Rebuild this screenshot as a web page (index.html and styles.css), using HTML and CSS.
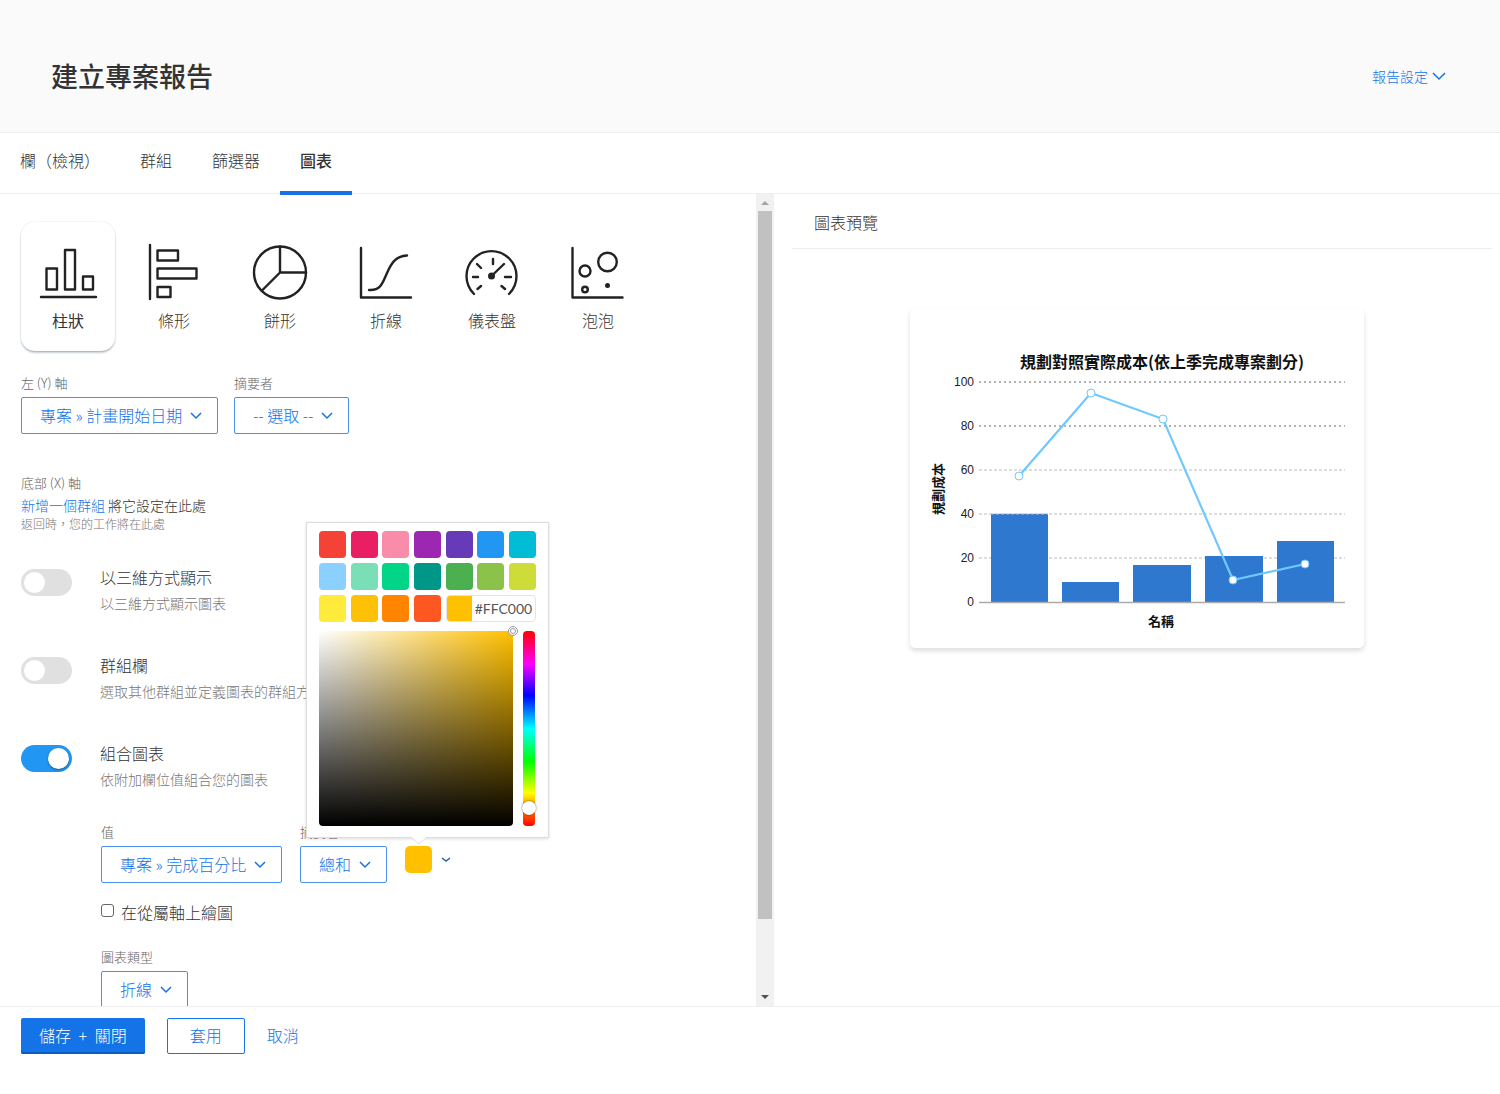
FILE: index.html
```html
<!DOCTYPE html>
<html lang="zh-Hant">
<head>
<meta charset="utf-8">
<meta name="viewport" content="width=device-width, initial-scale=1">
<title>建立專案報告</title>
<link rel="stylesheet" href="styles.css">
</head>
<body>
<header class="page-header">
  <h1 class="page-title">建立專案報告</h1>
  <button type="button" class="settings-button">報告設定
    <svg width="14" height="9" viewBox="0 0 14 9" aria-hidden="true"><path class="chevron" d="M1 1l6 6 6-6"/></svg>
  </button>
</header>

<nav class="tabs">
  <a class="tab" href="#columns">欄（檢視）</a>
  <a class="tab" href="#groups">群組</a>
  <a class="tab" href="#filters">篩選器</a>
  <a class="tab tab-active" href="#chart" aria-current="page">圖表</a>
</nav>

<main class="workspace">
  <section class="options" id="chart">
    <div class="chart-types">
      <button type="button" class="chart-type chart-type-active" aria-pressed="true">
        <svg class="type-icon" viewBox="0 0 60 60" aria-hidden="true"><path d="M3 55H58M8.500 26.500h10.500v21H8.500zM27 8h10v39.500H27zM45 34.500h10v13H45z"/></svg>
        柱狀
      </button>
      <button type="button" class="chart-type">
        <svg class="type-icon" viewBox="0 0 60 60" aria-hidden="true"><path d="M6 3V57M13.500 8.500H34v10H13.500zM13.500 26.500h39v10h-39zM13.500 45h13v10h-13z"/></svg>
        條形
      </button>
      <button type="button" class="chart-type">
        <svg class="type-icon" viewBox="0 0 60 60" aria-hidden="true"><circle cx="30" cy="30.500" r="26"/><path d="M30 4.500v26h26M30 30.500L12 48.500"/></svg>
        餅形
      </button>
      <button type="button" class="chart-type">
        <svg class="type-icon" viewBox="0 0 60 60" aria-hidden="true"><path d="M5 6v49.500h50M13 48C25 49 27 40 31 31S39 14 51 13.500"/></svg>
        折線
      </button>
      <button type="button" class="chart-type">
        <svg class="type-icon" viewBox="0 0 60 60" aria-hidden="true"><path d="M12 52A25 25 0 1 1 47 52M29.500 34L42 22M31 17v5M15 22l4 4M11 35h5M43 35h6M15.500 47l3.500-3M39.500 44l3.500 3"/><circle class="solid" cx="29.500" cy="34" r="3.500"/></svg>
        儀表盤
      </button>
      <button type="button" class="chart-type">
        <svg class="type-icon" viewBox="0 0 60 60" aria-hidden="true"><path d="M4.500 6v49.500h50"/><circle cx="17" cy="29" r="5.500"/><circle cx="39.500" cy="20" r="9.300"/><circle cx="17" cy="47.500" r="2.800"/><circle class="solid" cx="39.500" cy="43.500" r="2.500"/></svg>
        泡泡
      </button>
    </div>

    <div class="field-row">
      <div class="field">
        <label class="field-label" for="y-axis">左 (Y) 軸</label>
        <span class="dropdown">
          <select id="y-axis"><option>專案 » 計畫開始日期</option></select>
          <svg width="12" height="8" viewBox="0 0 12 8" aria-hidden="true"><path class="chevron" d="M1 1l5 5 5-5"/></svg>
        </span>
      </div>
      <div class="field">
        <label class="field-label" for="y-summary">摘要者</label>
        <span class="dropdown">
          <select id="y-summary"><option>-- 選取 --</option></select>
          <svg width="12" height="8" viewBox="0 0 12 8" aria-hidden="true"><path class="chevron" d="M1 1l5 5 5-5"/></svg>
        </span>
      </div>
    </div>

    <div class="x-axis">
      <div class="field-label">底部 (X) 軸</div>
      <p class="x-axis-text"><a href="#groups">新增一個群組</a> 將它設定在此處</p>
      <p class="x-axis-note">返回時，您的工作將在此處</p>
    </div>

    <div class="toggle-row">
      <input class="switch" type="checkbox" role="switch" id="three-d">
      <div>
        <label class="toggle-title" for="three-d">以三維方式顯示</label>
        <p class="toggle-note">以三維方式顯示圖表</p>
      </div>
    </div>
    <div class="toggle-row">
      <input class="switch" type="checkbox" role="switch" id="group-column">
      <div>
        <label class="toggle-title" for="group-column">群組欄</label>
        <p class="toggle-note">選取其他群組並定義圖表的群組方式</p>
      </div>
    </div>
    <div class="toggle-row">
      <input class="switch" type="checkbox" role="switch" id="combo" checked>
      <div>
        <label class="toggle-title" for="combo">組合圖表</label>
        <p class="toggle-note">依附加欄位值組合您的圖表</p>
      </div>
    </div>

    <div class="combo-options">
      <div class="combo-fields">
        <div class="field">
          <label class="field-label" for="combo-value">值</label>
          <span class="dropdown">
            <select id="combo-value"><option>專案 » 完成百分比</option></select>
            <svg width="12" height="8" viewBox="0 0 12 8" aria-hidden="true"><path class="chevron" d="M1 1l5 5 5-5"/></svg>
          </span>
        </div>
        <div class="field">
          <label class="field-label" for="combo-summary">摘要者</label>
          <span class="dropdown">
            <select id="combo-summary"><option>總和</option></select>
            <svg width="12" height="8" viewBox="0 0 12 8" aria-hidden="true"><path class="chevron" d="M1 1l5 5 5-5"/></svg>
          </span>
        </div>
        <div class="color-field">
          <button type="button" class="color-button" aria-label="色彩">
            <span class="color-current"></span>
            <svg width="10" height="6" viewBox="0 0 10 6" aria-hidden="true"><path class="chevron chevron-dark" d="M1 1l4 3 4-3"/></svg>
          </button>
          <div class="picker">
            <div class="palette">
              <button type="button" class="swatch c-red" aria-label="#F44336"></button>
              <button type="button" class="swatch c-pink" aria-label="#E91E63"></button>
              <button type="button" class="swatch c-rose" aria-label="#F98DA9"></button>
              <button type="button" class="swatch c-purple" aria-label="#9C27B0"></button>
              <button type="button" class="swatch c-violet" aria-label="#673AB7"></button>
              <button type="button" class="swatch c-blue" aria-label="#2196F3"></button>
              <button type="button" class="swatch c-cyan" aria-label="#00BCD4"></button>
              <button type="button" class="swatch c-sky" aria-label="#8CD0FF"></button>
              <button type="button" class="swatch c-mint" aria-label="#7ADEB6"></button>
              <button type="button" class="swatch c-emerald" aria-label="#03D588"></button>
              <button type="button" class="swatch c-teal" aria-label="#009688"></button>
              <button type="button" class="swatch c-green" aria-label="#4CAF50"></button>
              <button type="button" class="swatch c-leaf" aria-label="#8BC34A"></button>
              <button type="button" class="swatch c-lime" aria-label="#CDDC39"></button>
              <button type="button" class="swatch c-yellow" aria-label="#FFEB3B"></button>
              <button type="button" class="swatch c-amber" aria-label="#FFC107"></button>
              <button type="button" class="swatch c-orange" aria-label="#FF8400"></button>
              <button type="button" class="swatch c-flame" aria-label="#FF5722"></button>
              <div class="hex">
                <span class="hex-sample"></span>
                <input class="hex-input" type="text" value="#FFC000" aria-label="色碼">
              </div>
            </div>
            <div class="picker-body">
              <div class="shade"><span class="shade-handle"></span></div>
              <input class="hue" type="range" min="0" max="100" value="94" aria-label="色相">
            </div>
            <svg class="picker-arrow" width="18" height="9" viewBox="0 0 18 9" aria-hidden="true"><path d="M1 0l8 7 8-7"/></svg>
          </div>
        </div>
      </div>

      <div class="check-row">
        <input type="checkbox" class="check" id="secondary-axis">
        <label for="secondary-axis">在從屬軸上繪圖</label>
      </div>

      <div class="field">
        <label class="field-label" for="combo-type">圖表類型</label>
        <span class="dropdown">
          <select id="combo-type"><option>折線</option></select>
          <svg width="12" height="8" viewBox="0 0 12 8" aria-hidden="true"><path class="chevron" d="M1 1l5 5 5-5"/></svg>
        </span>
      </div>
    </div>
  </section>

  <div class="scrollbar" aria-hidden="true">
    <svg width="18" height="17" viewBox="0 0 18 17"><path fill="#a3a3a3" d="M5 11l4-4 4 4z"/></svg>
    <div class="scroll-track"><div class="scroll-thumb"></div></div>
    <svg width="18" height="17" viewBox="0 0 18 17"><path fill="#505050" d="M5 6l4 4 4-4z"/></svg>
  </div>

  <section class="preview">
    <h2 class="preview-title">圖表預覽</h2>
    <div class="chart-card">
      <svg class="chart" viewBox="0 0 454 339" role="img" aria-label="規劃對照實際成本">
        <text class="chart-title" x="252" y="59">規劃對照實際成本(依上季完成專案劃分)</text>
        <g class="grid-line">
          <path class="grid-dark" d="M69 73H435M69 117H435"/>
          <path d="M69 161H435M69 205H435M69 249H435"/>
        </g>
        <g class="tick">
          <text x="64" y="77">100</text>
          <text x="64" y="121">80</text>
          <text x="64" y="165">60</text>
          <text x="64" y="209">40</text>
          <text x="64" y="253">20</text>
          <text x="64" y="297">0</text>
        </g>
        <path class="bars" d="M81 205h57v88h-57zM152 273h57v20h-57zM223 256h58v37h-58zM295 247h58v46h-58zM367 232h57v61h-57z"/>
        <path class="base-line" d="M69 293.500H435"/>
        <path class="grid-line" d="M81 205H138"/>
        <path class="trend" d="M109 167L181 84L253 110L323 271L395 255"/>
        <g class="points">
          <circle cx="109" cy="167" r="4"/>
          <circle cx="181" cy="84" r="4"/>
          <circle cx="253" cy="110" r="4"/>
          <circle cx="323" cy="271" r="4"/>
          <circle cx="395" cy="255" r="4"/>
        </g>
        <text class="axis-title" x="251" y="317">名稱</text>
        <text class="axis-title" transform="translate(33 180) rotate(-90)">規劃成本</text>
      </svg>
    </div>
  </section>
</main>

<footer class="actions">
  <button type="button" class="button button-primary">儲存 <span class="plus">+</span> 關閉</button>
  <button type="button" class="button button-outline">套用</button>
  <button type="button" class="button button-link">取消</button>
</footer>
</body>
</html>
```

FILE: styles.css
```css
* {
  box-sizing: border-box;
}

body {
  margin: 0;
  height: 100vh;
  display: flex;
  flex-direction: column;
  overflow: hidden;
  background: #fff;
  color: #333;
  font-family: "Noto Sans CJK TC", sans-serif;
  font-size: 16px;
  font-weight: 300;
  line-height: 24px;
}

button,
input,
select {
  margin: 0;
  padding: 0;
  border: 0;
  background: none;
  color: inherit;
  font: inherit;
}

h1,
h2,
p {
  margin: 0;
}

a {
  color: #1473e6;
  text-decoration: none;
}

.chevron {
  fill: none;
  stroke: currentColor;
  stroke-width: 1.5;
}

/* Header and tabs */
.page-header {
  display: flex;
  align-items: center;
  justify-content: space-between;
  padding: 55px 54px 35px 51px;
  border-bottom: 1px solid #eee;
  background: #fafafa;
}

.page-title {
  font-size: 27px;
  font-weight: 500;
  line-height: 42px;
}

.settings-button {
  display: flex;
  align-items: center;
  gap: 4px;
  color: #1473e6;
  font-size: 14px;
}

.tabs {
  display: flex;
  flex: none;
  height: 61px;
  border-bottom: 1px solid #eee;
}

.tab {
  height: 62px;
  padding: 15px 20px 0;
  color: #333;
}

.tab-active {
  border-bottom: 4px solid #1473e6;
  font-weight: 500;
}

/* Two panes */
.workspace {
  display: flex;
  flex: 1;
  min-height: 0;
}

.options {
  flex: 0 0 50.4%;
  min-width: 0;
  padding: 28px 21px 0;
  overflow: hidden;
}

.chart-types {
  display: flex;
  gap: 12px;
  margin-bottom: 20px;
}

.chart-type {
  display: flex;
  flex-direction: column;
  align-items: center;
  gap: 6px;
  width: 94px;
  height: 129px;
  padding-top: 20px;
  border-radius: 14px;
}

.chart-type-active {
  box-shadow: 0 2px 3px -1px #8a9aa8, 0 0 2px #0002;
  font-weight: 400;
}

.type-icon {
  width: 60px;
  height: 60px;
  fill: none;
  stroke: #222;
  stroke-width: 2.4;
  stroke-linecap: round;
  stroke-linejoin: round;
}

.solid {
  fill: #222;
  stroke: none;
}

.field-row {
  display: flex;
  gap: 16px;
  margin-bottom: 37px;
}

.field {
  display: flex;
  flex-direction: column;
  align-items: flex-start;
}

.field-label {
  color: #666;
  font-size: 13px;
  line-height: 24px;
}

.field > .field-label {
  margin-bottom: 2px;
}

.dropdown {
  display: inline-grid;
  align-items: center;
  color: #1473e6;
}

.dropdown select {
  grid-area: 1 / 1;
  height: 37px;
  padding: 0 34px 2px 18px;
  border: 1px solid #4a90e8;
  border-radius: 2px;
  appearance: none;
}

.dropdown svg {
  grid-area: 1 / 1;
  justify-self: end;
  margin-right: 16px;
  pointer-events: none;
}

.x-axis {
  margin-bottom: 32px;
}

.x-axis-text {
  font-size: 14px;
  line-height: 20px;
}

.x-axis-note {
  color: #777;
  font-size: 12px;
  line-height: 18px;
}

.toggle-row {
  display: flex;
  gap: 28px;
  height: 88px;
}

.switch {
  display: flex;
  align-items: center;
  flex: none;
  width: 51px;
  height: 27px;
  margin-top: 4px;
  padding: 0 3px;
  border-radius: 14px;
  background: #e0e0e0;
  appearance: none;
}

.switch::before {
  content: "";
  width: 21px;
  height: 21px;
  border-radius: 50%;
  background: #fff;
}

.switch:checked {
  justify-content: flex-end;
  background: #2196f3;
}

.switch:checked::before {
  box-shadow: 0 1px 2px #0006;
}

.toggle-note {
  margin-top: 2px;
  color: #777;
  font-size: 14px;
}

.combo-options {
  margin-left: 80px;
  margin-top: -9px;
}

.combo-fields {
  display: flex;
  align-items: flex-end;
  gap: 18px;
}

.color-field {
  position: relative;
  align-self: flex-start;
  padding-top: 26px;
}

.color-button {
  display: flex;
  align-items: center;
  gap: 9px;
}

.color-current {
  width: 27px;
  height: 27px;
  border-radius: 5px;
  background: #ffc000;
}

.chevron-dark {
  stroke: #2a62a8;
}

/* Colour picker, floating above its swatch */
.picker {
  position: absolute;
  left: -99px;
  bottom: 46px;
  width: 243px;
  padding: 8px 12px 11px;
  border: 1px solid #ddd;
  background: #fff;
  box-shadow: 0 1px 3px #0002;
}

.color-field .picker {
  bottom: 35px;
}

.palette {
  display: grid;
  grid-template-columns: repeat(7, 27px);
  justify-content: space-between;
  row-gap: 5px;
}

.swatch {
  height: 27px;
  border-radius: 4px;
}

.c-red { background: #f44336; }
.c-pink { background: #e91e63; }
.c-rose { background: #f98da9; }
.c-purple { background: #9c27b0; }
.c-violet { background: #673ab7; }
.c-blue { background: #2196f3; }
.c-cyan { background: #00bcd4; }
.c-sky { background: #8cd0ff; }
.c-mint { background: #7adeb6; }
.c-emerald { background: #03d588; }
.c-teal { background: #009688; }
.c-green { background: #4caf50; }
.c-leaf { background: #8bc34a; }
.c-lime { background: #cddc39; }
.c-yellow { background: #ffeb3b; }
.c-amber { background: #ffc107; }
.c-orange { background: #ff8400; }
.c-flame { background: #ff5722; }

.hex {
  display: flex;
  grid-column: span 3;
  overflow: hidden;
  border: 1px solid #e4e4e4;
  border-radius: 4px;
}

.hex-sample {
  flex: none;
  width: 25px;
  background: #ffc000;
}

.hex-input {
  width: 100%;
  min-width: 0;
  padding-left: 3px;
  color: #555;
  font-family: Lato, sans-serif;
  font-size: 14px;
  font-weight: 400;
}

.picker-body {
  display: flex;
  justify-content: space-between;
  margin-top: 9px;
}

.shade {
  position: relative;
  width: 194px;
  height: 195px;
  border-radius: 4px;
  background: linear-gradient(to top, #000, transparent), linear-gradient(to right, #fff, #ffc000);
}

.shade-handle {
  position: absolute;
  top: -5px;
  right: -5px;
  width: 10px;
  height: 10px;
  border: 3px double #999;
  border-radius: 50%;
  background: #fff;
}

.hue {
  width: 14px;
  height: 195px;
  appearance: none;
  writing-mode: vertical-lr;
}

.hue::-webkit-slider-runnable-track {
  width: 12px;
  height: 195px;
  border-radius: 4px;
  background: linear-gradient(#f00, #f0f 17%, #00f 33%, #0ff 50%, #0f0 67%, #ff0 83%, #f00);
}

.hue::-webkit-slider-thumb {
  width: 14px;
  height: 14px;
  margin-left: -1px;
  border-radius: 50%;
  background: #fff;
  box-shadow: 0 0 2px #000a;
  appearance: none;
}

.picker-arrow {
  position: absolute;
  top: 100%;
  left: 103px;
  fill: #fff;
  stroke: #ddd;
}

.check-row {
  display: flex;
  align-items: center;
  gap: 7px;
  margin: 17px 0 21px;
}

.check {
  width: 13px;
  height: 13px;
  margin-bottom: 4px;
  border: 1px solid #666;
  border-radius: 3px;
  appearance: none;
}

.scrollbar {
  display: flex;
  flex: none;
  flex-direction: column;
  width: 18px;
  background: #f1f1f1;
}

.scroll-track {
  flex: 1;
  padding: 0 2px;
}

.scroll-thumb {
  height: 91%;
  background: #c1c1c1;
}

/* Preview */
.preview {
  flex: 1;
  min-width: 0;
}

.preview-title {
  margin: 0 8px 0 18px;
  padding: 16px 22px 14px;
  border-bottom: 1px solid #eee;
  font-size: 16px;
  font-weight: 300;
}

.chart-card {
  max-width: 454px;
  margin: 60px auto 0;
  border-radius: 5px;
  box-shadow: 0 3px 5px #0002;
}

.chart {
  display: block;
  width: 100%;
}

.chart-title {
  fill: #111;
  font-size: 16px;
  font-weight: 700;
  text-anchor: middle;
}

.axis-title {
  fill: #111;
  font-size: 13px;
  font-weight: 700;
  text-anchor: middle;
}

.tick {
  fill: #222;
  font-family: "Liberation Sans", sans-serif;
  font-size: 12px;
  font-weight: 400;
  text-anchor: end;
}

.grid-line {
  fill: none;
  stroke: #bbb;
  stroke-dasharray: 3 2;
}

.grid-dark {
  stroke: #666;
  stroke-dasharray: 2 3;
}

.bars {
  fill: #2f78d0;
}

.base-line {
  stroke: #aaa;
  stroke-width: 1.5;
}

.trend {
  fill: none;
  stroke: #70c8ff;
  stroke-width: 2.2;
}

.points {
  fill: #fff;
  stroke: #70c8ff;
}

/* Footer */
.actions {
  display: flex;
  flex: none;
  height: 88px;
  padding: 11px 21px;
  border-top: 1px solid #eee;
}

.button {
  height: 36px;
  padding: 0 22px 3px;
  border-radius: 2px;
  color: #1473e6;
}

.button-primary {
  margin-right: 22px;
  padding: 0 18px 3px;
  background: #1473e6;
  box-shadow: inset 0 -2px #0d5cc0;
  color: #fff;
}

.plus {
  margin: 0 4px;
}

.button-outline {
  border: 1px solid #1473e6;
}
```
